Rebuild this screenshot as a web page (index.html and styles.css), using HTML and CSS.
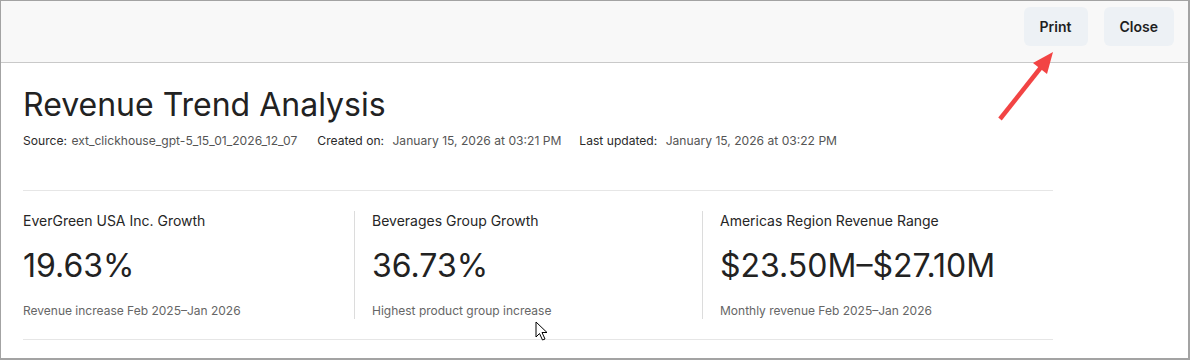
FILE: index.html
```html
<!DOCTYPE html>
<html lang="en">
<head>
<meta charset="utf-8">
<title>Revenue Trend Analysis</title>
<link rel="stylesheet" href="styles.css">
</head>
<body>
<div class="frame">
  <header class="topbar">
    <button class="btn">Print</button>
    <button class="btn">Close</button>
  </header>
  <main class="content">
    <h1 class="title">Revenue Trend Analysis</h1>
    <div class="meta">
      <span class="meta-item"><span class="meta-label">Source:</span> <span class="meta-value">ext_clickhouse_gpt-5_15_01_2026_12_07</span></span>
      <span class="meta-item meta-created"><span class="meta-label">Created on:</span> <span class="meta-value meta-date">January 15, 2026 at 03:21 PM</span></span>
      <span class="meta-item"><span class="meta-label">Last updated:</span> <span class="meta-value meta-date">January 15, 2026 at 03:22 PM</span></span>
    </div>
    <section class="stats">
      <div class="stat">
        <div class="stat-label">EverGreen USA Inc. Growth</div>
        <div class="stat-value">19.63%</div>
        <div class="stat-sub">Revenue increase Feb 2025–Jan 2026</div>
      </div>
      <div class="stat">
        <div class="stat-label">Beverages Group Growth</div>
        <div class="stat-value">36.73%</div>
        <div class="stat-sub">Highest product group increase</div>
      </div>
      <div class="stat">
        <div class="stat-label">Americas Region Revenue Range</div>
        <div class="stat-value">$23.50M–$27.10M</div>
        <div class="stat-sub">Monthly revenue Feb 2025–Jan 2026</div>
      </div>
    </section>
  </main>
  <svg class="annot-arrow" width="70" height="80" viewBox="0 0 70 80">
    <line x1="5" y1="76" x2="47" y2="23" stroke="#f24444" stroke-width="4.5" stroke-linecap="butt"/>
    <polygon points="58,9 38,20 52,31" fill="#f24444"/>
  </svg>
  <svg class="cursor" width="14" height="21" viewBox="0 0 14 21">
    <path d="M1 1 L1 16 L4.5 12.5 L7.5 19 L10 18 L7 11.5 L12 11.5 Z" fill="#fff" stroke="#000" stroke-width="1" stroke-linejoin="round"/>
  </svg>
</div>
</body>
</html>
```

FILE: styles.css
```css
* { box-sizing: border-box; }
html, body { margin: 0; padding: 0; background: #fff; }
body {
  font-family: Inter, "Noto Sans", "Liberation Sans", sans-serif;
  color: #222;
}
.frame {
  position: relative;
  width: 1190px;
  height: 360px;
  border: 1px solid #a3a3a3;
  border-right-width: 2px;
  border-bottom-width: 2px;
  overflow: hidden;
}
.topbar {
  height: 62px;
  background: #f8f8f8;
  border-bottom: 1px solid #c9c9c9;
  display: flex;
  justify-content: flex-end;
  align-items: flex-start;
  gap: 16px;
  padding: 6px 14px 0 0;
}
.btn {
  font-family: inherit;
  font-size: 14px;
  font-weight: 600;
  color: #1f1f1f;
  background: #edf1f5;
  border: none;
  border-radius: 6px;
  height: 39px;
  min-width: 64px;
  padding: 0 16px;
}
.content {
  padding: 0 0 0 22px;
  width: 1052px;
}
.title {
  margin: 22px 0 0 0;
  font-size: 32px;
  font-weight: 400;
  line-height: 40px;
  color: #222;
}
.meta {
  display: flex;
  gap: 18px;
  font-size: 12.1px;
  line-height: 16px;
  margin-top: 8px;
}
.meta-created { margin-left: 2px; }
.meta-label { color: #2a2a2a; }
.meta-value { color: #555; margin-left: 1px; }
.meta-date { margin-left: 5px; }
.stats {
  margin-top: 41px;
  border-top: 1px solid #e6e6e6;
  border-bottom: 1px solid #e6e6e6;
  padding: 20px 0 20px 0;
  display: grid;
  grid-template-columns: 331px 348px 1fr;
}
.stat + .stat {
  border-left: 1px solid #dcdcdc;
  padding-left: 17px;
}
.stat-label {
  font-size: 14px;
  line-height: 20px;
  color: #262626;
}
.stat-value {
  font-size: 32px;
  line-height: 40px;
  margin-top: 15px;
  color: #222;
}
.stat-sub {
  font-size: 12px;
  line-height: 16px;
  color: #666;
  margin-top: 17px;
}
.annot-arrow {
  position: absolute;
  left: 994px;
  top: 42px;
}
.cursor {
  position: absolute;
  left: 534px;
  top: 320px;
}
```
